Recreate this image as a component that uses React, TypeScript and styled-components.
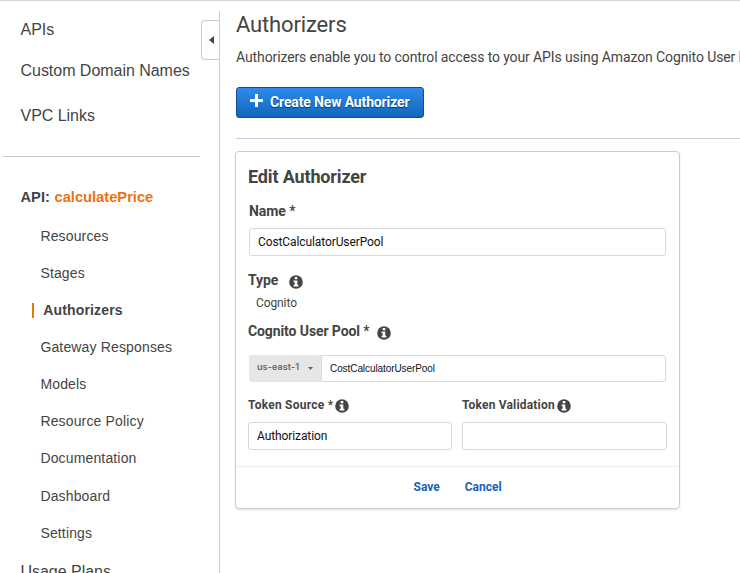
import React from "react";
import styled, { createGlobalStyle } from "styled-components";

const GlobalStyle = createGlobalStyle`
  * { box-sizing: border-box; }
  body { margin: 0; background: #fff; color: #444; font-family: Roboto, "Liberation Sans", sans-serif; }
  h1, h2, p { margin: 0; }
`;

const Page = styled.div`
  display: flex;
  height: 573px;
  overflow: hidden;
  border-top: 1px solid #d5d5d5;
`;

const Sidebar = styled.nav`
  position: relative;
  flex: 0 0 220px;
  height: 562px;
  margin-top: 10px;
  overflow: hidden;
  border-right: 1px solid #ccc;
  font-family: "Liberation Sans", Arial, sans-serif;
`;

const CollapseTab = styled.button`
  position: absolute;
  top: 9px;
  right: -1px;
  display: flex;
  align-items: center;
  width: 19px;
  height: 40px;
  padding: 0 0 0 6.5px;
  border: 1px solid #ccc;
  border-right: 0;
  border-radius: 4px 0 0 4px;
  background: #fff;
`;

const TopLinks = styled.div`
  display: flex;
  flex-direction: column;
  padding: 9px 0 0 20.5px;
`;

const TopLink = styled.a<{ $gap?: number }>`
  height: 20px;
  margin-bottom: ${(p) => p.$gap ?? 0}px;
  font-size: 16px;
  line-height: 20px;
  letter-spacing: -0.03px;
  white-space: nowrap;
`;

const SideDivider = styled.div`
  width: 197px;
  height: 1px;
  margin: 30px 0 30px 3px;
  background: #ccc;
`;

const ApiHeading = styled.div`
  height: 20px;
  margin-left: 20.5px;
  font-size: 14.7px;
  font-weight: 700;
  line-height: 20px;
`;

const ApiName = styled.span`
  margin-left: 0.5px;
  color: #ec7211;
`;

const ApiLinks = styled.div`
  display: flex;
  flex-direction: column;
  gap: 17.08px;
  padding: 19px 0 10.6px 40.4px;
`;

const ApiLink = styled.a<{ $active?: boolean }>`
  display: flex;
  align-items: center;
  height: 20px;
  font-size: 14px;
  font-weight: ${(p) => (p.$active ? 700 : 400)};
  line-height: 20px;
  letter-spacing: 0.15px;
  margin-left: ${(p) => (p.$active ? -8.4 : 0)}px;
`;

const ActiveBar = styled.span`
  width: 2px;
  height: 15px;
  margin-right: 9.3px;
  background: #e07b0a;
`;

const Main = styled.main`
  flex: 1;
  min-width: 0;
  padding: 9px 0 0 16px;
`;

const Title = styled.h1`
  font-size: 22px;
  font-weight: 400;
  line-height: 30px;
  letter-spacing: -0.15px;
`;

const Description = styled.p`
  margin-top: 7px;
  font-size: 14px;
  line-height: 20px;
  letter-spacing: -0.11px;
  white-space: nowrap;
`;

const CreateButton = styled.button`
  display: flex;
  align-items: center;
  gap: 7px;
  width: 188px;
  height: 31px;
  margin-top: 20px;
  padding: 0 0 1px 13px;
  border: 1px solid #114e91;
  border-radius: 3px;
  background: linear-gradient(#2e8bea, #1166bb);
  color: #fff;
  font: 700 14px Roboto, sans-serif;
  letter-spacing: -0.14px;
  text-shadow: 0 1px 1px #0a3a70;
  white-space: nowrap;

  svg { position: relative; top: -1.5px; }
`;

const MainDivider = styled.div`
  height: 1px;
  margin-top: 20px;
  background: #ccc;
`;

const Card = styled.section`
  width: 445px;
  height: 358px;
  margin: 12px 0 0 -1px;
  border: 1px solid #ccc;
  border-radius: 4px;
  box-shadow: 0 1px 2px rgba(0, 0, 0, 0.12);
`;

const CardBody = styled.div`
  height: 314px;
  padding: 13px 12px 0;
`;

const CardTitle = styled.h2`
  font-size: 18px;
  font-weight: 700;
  line-height: 24px;
  letter-spacing: -0.15px;
`;

const Label = styled.label<{ $top: number; $spacing?: number; $small?: boolean; $gap?: number; $indent?: number }>`
  display: flex;
  align-items: center;
  gap: ${(p) => p.$gap ?? 0}px;
  height: 20px;
  margin-top: ${(p) => p.$top}px;
  margin-left: ${(p) => p.$indent ?? 0}px;
  font-size: ${(p) => (p.$small ? 12 : 14)}px;
  font-weight: 700;
  line-height: 20px;
  letter-spacing: ${(p) => p.$spacing ?? -0.1}px;
  white-space: nowrap;

  svg { position: relative; top: ${(p) => (p.$small ? 0.5 : 1.5)}px; }
`;

const Required = styled.span`
  font-weight: 500;
`;

const Field = styled.input<{ $width: number }>`
  display: block;
  width: ${(p) => p.$width}px;
  height: 28px;
  padding: 0 8px;
  border: 1px solid #d9d9d9;
  border-radius: 3px;
  background: #fff;
  color: #111;
  font: 12px Roboto, sans-serif;
  letter-spacing: -0.1px;
`;

const NameRow = styled.div`
  margin: 7px 0 0 1px;
`;

const TypeValue = styled.p`
  margin: 4px 0 0 8px;
  font-size: 12px;
  line-height: 18px;
  letter-spacing: -0.1px;
`;

const PoolRow = styled.div`
  display: flex;
  width: 417px;
  height: 27px;
  margin: 14px 0 0 1px;
`;

const Region = styled.button`
  display: flex;
  align-items: center;
  gap: 9px;
  width: 72px;
  padding: 0 0 4px 8px;
  border: 0;
  border-radius: 3px 0 0 3px;
  background: #e6e6e6;
  color: #666;
  font: 600 9px Inter, sans-serif;
  letter-spacing: 0.1px;
  white-space: nowrap;

  svg { position: relative; top: 2px; }
`;

const PoolName = styled.input`
  flex: 1;
  min-width: 0;
  padding: 0 8px;
  border: 1px solid #d9d9d9;
  border-radius: 0 3px 3px 0;
  color: #111;
  font: 10px "Liberation Sans", sans-serif;
  letter-spacing: -0.08px;
`;

const TokenGrid = styled.div`
  display: grid;
  grid-template-columns: 204px 205px;
  column-gap: 10px;
  margin-top: 13px;
`;

const TokenField = styled.div`
  display: flex;
  flex-direction: column;
  gap: 7px;
`;

const CardFooter = styled.footer`
  display: flex;
  gap: 25px;
  height: 42px;
  padding-left: 177.5px;
  border-top: 1px solid #eee;
`;

const FooterLink = styled.a`
  color: #1a5fbb;
  font-size: 12px;
  font-weight: 700;
  line-height: 40px;
`;

const InfoIcon = () => (
  <svg width="14" height="14" viewBox="0 0 14 14">
    <circle cx="7" cy="7" r="6.8" fill="#444" />
    <path d="M5.7 2h2.6v2.2H5.7zM4.6 5.5h3.7v4.3h1.1v1.7H4.6V9.8h1.1V7.2H4.6z" fill="#fff" />
  </svg>
);

const PlusIcon = () => (
  <svg width="13" height="13" viewBox="0 0 13 13">
    <path d="M5 0h3v5h5v3H8v5H5V8H0V5h5z" fill="#fff" />
  </svg>
);

const LeftArrow = () => (
  <svg width="5" height="8" viewBox="0 0 5 8">
    <path d="M5 0v8L0 4z" fill="#444" />
  </svg>
);

const Caret = () => (
  <svg width="5" height="3" viewBox="0 0 5 3">
    <path d="M0 0h5L2.5 3z" fill="#666" />
  </svg>
);

const apiLinks = [
  "Resources",
  "Stages",
  "Authorizers",
  "Gateway Responses",
  "Models",
  "Resource Policy",
  "Documentation",
  "Dashboard",
  "Settings",
];

export default function App() {
  return (
    <Page>
      <GlobalStyle />
      <Sidebar>
        <TopLinks>
          <TopLink $gap={21}>APIs</TopLink>
          <TopLink $gap={25}>Custom Domain Names</TopLink>
          <TopLink>VPC Links</TopLink>
        </TopLinks>
        <SideDivider />
        <ApiHeading>
          API: <ApiName>calculatePrice</ApiName>
        </ApiHeading>
        <ApiLinks>
          {apiLinks.map((name) => (
            <ApiLink key={name} $active={name === "Authorizers"}>
              {name === "Authorizers" && <ActiveBar />}
              {name}
            </ApiLink>
          ))}
        </ApiLinks>
        <TopLinks>
          <TopLink>Usage Plans</TopLink>
        </TopLinks>
        <CollapseTab aria-label="Collapse navigation">
          <LeftArrow />
        </CollapseTab>
      </Sidebar>
      <Main>
        <Title>Authorizers</Title>
        <Description>
          Authorizers enable you to control access to your APIs using Amazon Cognito User Pools
        </Description>
        <CreateButton>
          <PlusIcon />
          Create New Authorizer
        </CreateButton>
        <MainDivider />
        <Card>
          <CardBody>
            <CardTitle>Edit Authorizer</CardTitle>
            <Label $top={12} $indent={1} $gap={3.5}>
              Name <Required>*</Required>
            </Label>
            <NameRow>
              <Field $width={417} defaultValue="CostCalculatorUserPool" />
            </NameRow>
            <Label $top={14} $gap={11}>
              Type <InfoIcon />
            </Label>
            <TypeValue>Cognito</TypeValue>
            <Label $top={9} $gap={7.3}>
              <span>
                Cognito User Pool <Required>*</Required>
              </span>
              <InfoIcon />
            </Label>
            <PoolRow>
              <Region>
                us-east-1 <Caret />
              </Region>
              <PoolName defaultValue="CostCalculatorUserPool" />
            </PoolRow>
            <TokenGrid>
              <TokenField>
                <Label $top={0} $small $gap={2} $spacing={0.24}>
                  <span>
                    Token Source <Required>*</Required>
                  </span>
                  <InfoIcon />
                </Label>
                <Field $width={204} defaultValue="Authorization" />
              </TokenField>
              <TokenField>
                <Label $top={0} $small $gap={2} $spacing={0.18}>
                  Token Validation <InfoIcon />
                </Label>
                <Field $width={205} />
              </TokenField>
            </TokenGrid>
          </CardBody>
          <CardFooter>
            <FooterLink>Save</FooterLink>
            <FooterLink>Cancel</FooterLink>
          </CardFooter>
        </Card>
      </Main>
    </Page>
  );
}
